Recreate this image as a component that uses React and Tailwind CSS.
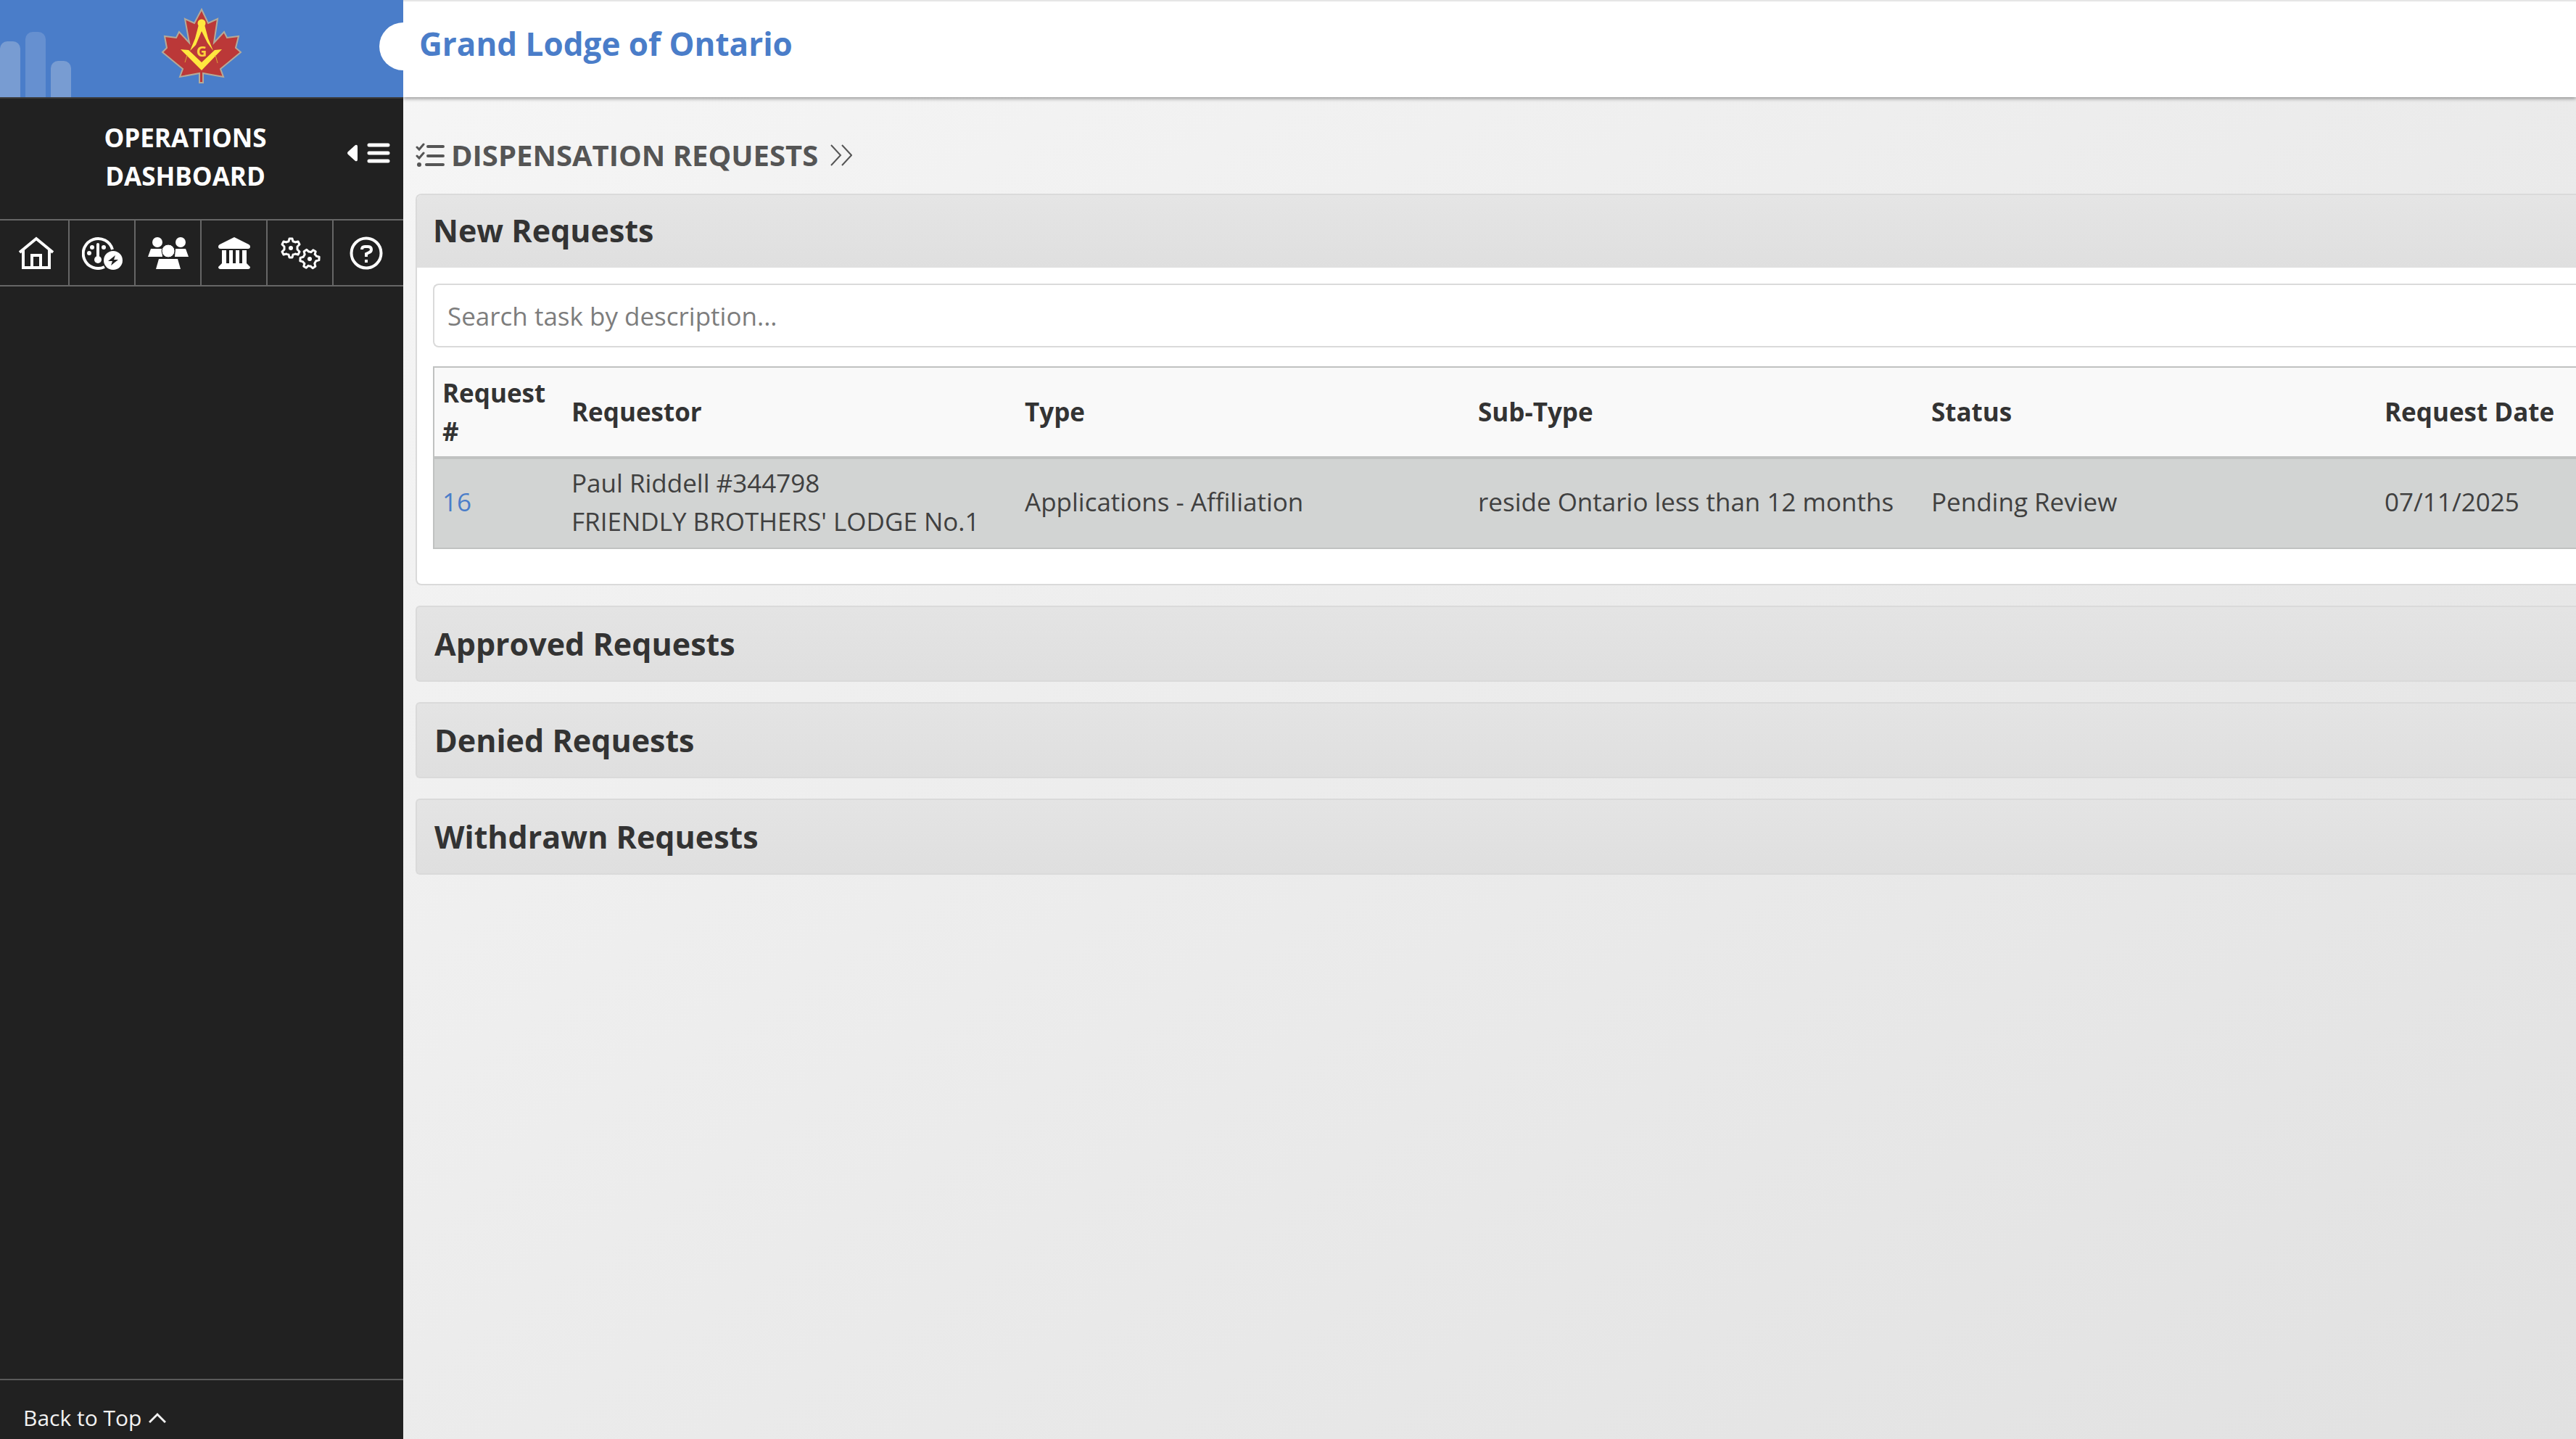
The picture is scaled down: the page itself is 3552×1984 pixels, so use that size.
import React, { useState } from 'react';

const panels = ['Approved Requests', 'Denied Requests', 'Withdrawn Requests'];

const columns = ['Requestor', 'Type', 'Sub-Type', 'Status', 'Request Date'];

const requests = [
  {
    id: 16,
    requestor: 'Paul Riddell #344798',
    lodge: "FRIENDLY BROTHERS' LODGE No.1",
    type: 'Applications - Affiliation',
    subType: 'reside Ontario less than 12 months',
    status: 'Pending Review',
    date: '07/11/2025',
  },
];

function MapleLogo() {
  return (
    <svg viewBox="-2 0 160 130" className="h-[130px] w-[160px]" aria-hidden="true">
      <path
        d="M78 13 L87 32 L100 26 L95 59 L109 44 L113 52 L129 50 L125 66 L132 72 L104 95 L108 106 L80 101 L80 114 L75 114 L75 101 L48 106 L52 95 L24 72 L30 66 L27 50 L43 52 L47 44 L61 59 L55 26 L68 32 Z"
        fill="#bb3838"
        stroke="#b5aa98"
        strokeWidth="2"
      />
      <path d="M49 68 L60 69 L78 86 L96 69 L106 68 L78 97 Z" fill="#ffe83f" />
      <path d="M74 34 L69 53 L62 70 L70 62 L78 43 L86 59 L94 70 L87 53 L82 34 Z" fill="#ffe83f" />
      <circle cx="78" cy="32" r="5.500" fill="#ffe83f" />
      <text x="78" y="78" textAnchor="middle" fontSize="20" fontWeight="700" fill="#fbd23c">
        G
      </text>
      <path d="M58 76 L55 86 M97 76 L100 87" stroke="#d9a43a" strokeWidth="1" />
    </svg>
  );
}

function HomeIcon() {
  return (
    <svg viewBox="0 0 48 46" className="h-[46px] w-[48px]" fill="none" stroke="currentColor" strokeWidth="4" aria-hidden="true">
      <path d="M1 22 L24 3 L47 22 M6 19 V43 H42 V19 M18 43 V26 H30 V43" />
    </svg>
  );
}

function GaugeIcon() {
  return (
    <svg viewBox="0 0 56 46" className="h-[46px] w-[56px]" fill="none" stroke="currentColor" aria-hidden="true">
      <path d="M42 18 A20.500 20.500 0 1 0 31 42" strokeWidth="4" />
      <path d="M22 11 V32" strokeWidth="4" strokeLinecap="round" />
      <g fill="currentColor" stroke="none">
        <circle cx="22" cy="32" r="5" />
        <circle cx="14" cy="15" r="3" />
        <circle cx="30" cy="15" r="3" />
        <circle cx="10" cy="23" r="3" />
        <circle cx="43" cy="33" r="13" />
      </g>
      <path d="M46 26 L36 34 H42 L40 40 L50 32 H44 Z" fill="#212121" stroke="none" />
    </svg>
  );
}

function MembersIcon() {
  return (
    <svg viewBox="0 0 56 46" className="h-[46px] w-[56px]" fill="currentColor" aria-hidden="true">
      <circle cx="13" cy="8" r="7" />
      <circle cx="45" cy="8" r="7" />
      <path d="M4 17 H19 L20 28 H0 Z M38 17 H52 L56 28 H37 Z" />
      <circle cx="28" cy="20" r="9" stroke="#212121" strokeWidth="1" />
      <path d="M15 31 H41 L45 45 H11 Z" />
    </svg>
  );
}

function LodgeIcon() {
  return (
    <svg viewBox="0 0 46 46" className="size-[46px]" fill="currentColor" aria-hidden="true">
      <path d="M23 1 L43 11 Q45 12 45 14 Q45 17 42 17 H4 Q1 17 1 14 Q1 12 3 11 Z" />
      <path d="M6 19 H12 V37 H16 V19 H21 V37 H25 V19 H30 V37 H34 V19 H40 V37 L45 42 Q45 45 42 45 H4 Q1 45 1 42 L6 37 Z" />
    </svg>
  );
}

const gear =
  'M-2 -13 H2 L3 -9 Q5 -9 6 -8 L10 -9 L12 -5 L9 -2 V2 L12 5 L10 9 L6 8 Q5 9 3 9 L2 13 H-2 L-3 9 Q-5 9 -6 8 L-10 9 L-12 5 L-9 2 V-2 L-12 -5 L-10 -9 L-6 -8 Q-5 -9 -3 -9 Z';

function GearsIcon() {
  return (
    <svg viewBox="0 0 56 46" className="h-[46px] w-[56px]" fill="none" stroke="currentColor" strokeWidth="3" strokeLinejoin="round" aria-hidden="true">
      <path d={gear} transform="translate(15 16)" />
      <path d={gear} transform="translate(41 31) rotate(30)" />
      <circle cx="15" cy="16" r="3" fill="currentColor" stroke="none" />
      <circle cx="41" cy="31" r="3" fill="currentColor" stroke="none" />
    </svg>
  );
}

function HelpIcon() {
  return (
    <svg viewBox="0 0 46 46" className="size-[46px]" fill="none" stroke="currentColor" strokeWidth="4" aria-hidden="true">
      <circle cx="23" cy="23" r="20.500" />
      <path d="M17 18 Q17 14 21 14 H25 Q30 14 30 18 Q30 21 27 22 L23 24 V28" />
      <path d="M21 34 H25" />
    </svg>
  );
}

function CollapseIcon() {
  return (
    <svg viewBox="0 0 60 30" className="h-[30px] w-[60px]" fill="currentColor" aria-hidden="true">
      <path d="M2 13 L12 4 Q15 3 15 6 V24 Q15 27 12 26 L2 17 Q0 15 2 13 Z" />
      <path d="M31 4 H57 M31 15 H57 M31 26 H57" stroke="currentColor" strokeWidth="5" strokeLinecap="round" />
    </svg>
  );
}

function TasksIcon() {
  return (
    <svg viewBox="0 0 40 34" className="h-[34px] w-[40px]" fill="none" stroke="currentColor" strokeWidth="4" strokeLinecap="round" aria-hidden="true">
      <path d="M17 5 H38 M17 18 H38 M15 30 H38" />
      <path d="M2 6 L5 9 L11 2 M2 18 L5 21 L11 14" strokeWidth="3" />
      <circle cx="5" cy="30" r="3" fill="currentColor" stroke="none" />
    </svg>
  );
}

const navItems = [
  { label: 'Home', Icon: HomeIcon },
  { label: 'Activity', Icon: GaugeIcon },
  { label: 'Members', Icon: MembersIcon },
  { label: 'Lodges', Icon: LodgeIcon },
  { label: 'Settings', Icon: GearsIcon },
  { label: 'Help', Icon: HelpIcon },
];

function Sidebar() {
  return (
    <aside className="flex w-[556px] shrink-0 flex-col bg-[#212121] text-white">
      <div className="relative flex h-[134px] justify-center overflow-hidden bg-[#4a7dc9]">
        <div className="absolute bottom-0 left-0 flex items-end gap-[7px]">
          <span className="h-[77px] w-[28px] rounded-t-[10px] bg-[#789cd2]" />
          <span className="h-[90px] w-[28px] rounded-t-[10px] bg-[#6690d0]" />
          <span className="h-[50px] w-[28px] rounded-t-[10px] bg-[#789cd2]" />
        </div>
        <MapleLogo />
        <span className="absolute top-[31px] -right-[33px] size-[66px] rounded-full bg-white" />
      </div>

      <div className="flex h-[168px] items-center border-t-2 border-[#3a3a3a] pr-[18px] pb-[6px]">
        <h2 className="flex-1 pl-[33px] text-center leading-[53px] font-bold">
          OPERATIONS
          <br />
          DASHBOARD
        </h2>
        <button type="button" aria-label="Collapse menu" className="mb-[10px]">
          <CollapseIcon />
        </button>
      </div>

      <nav className="flex h-[93px] border-y-2 border-[#666]">
        {navItems.map(({ label, Icon }) => (
          <a
            key={label}
            href="#"
            aria-label={label}
            className="flex w-[91px] items-center justify-center border-r-2 border-[#666] first:w-[96px] first:pl-[6px] last:flex-1 last:border-r-0 last:pr-[6px]"
          >
            <Icon />
          </a>
        ))}
      </nav>

      <a
        href="#"
        className="mt-auto flex h-[83px] items-center gap-[10px] border-t-2 border-[#5a5a5a] pt-[22px] pl-[32px] text-[30px] text-[#f2f2f2]"
      >
        Back to Top
        <svg viewBox="0 0 24 16" className="h-[16px] w-[24px]" fill="none" stroke="currentColor" strokeWidth="3" aria-hidden="true">
          <path d="M1 14 L12 3 L23 14" />
        </svg>
      </a>
    </aside>
  );
}

function RequestTable() {
  return (
    <table className="w-full table-fixed border-collapse border-y-2 border-l-2 border-[#c0c2c1] text-left">
      <thead className="border-b-4 border-[#c0c2c1] bg-[#f9f9f9]">
        <tr className="h-[125px]">
          <th className="w-[179px] px-[11px] leading-[53px]">Request #</th>
          {columns.map((name) => (
            <th key={name} className="w-[625px] px-[11px] last:w-auto">
              {name}
            </th>
          ))}
        </tr>
      </thead>
      <tbody className="bg-[#d2d4d3] text-[#404040]">
        {requests.map((r) => (
          <tr key={r.id} className="h-[125px]">
            <td className="px-[11px] pb-1">
              <a href="#" className="text-[#4a7dc9]">
                {r.id}
              </a>
            </td>
            <td className="px-[11px] pb-1 leading-[53px] whitespace-nowrap">
              {r.requestor}
              <br />
              {r.lodge}
            </td>
            <td className="px-[11px] pb-1">{r.type}</td>
            <td className="px-[11px] pb-1 whitespace-nowrap">{r.subType}</td>
            <td className="px-[11px] pb-1">{r.status}</td>
            <td className="px-[11px] pb-1">{r.date}</td>
          </tr>
        ))}
      </tbody>
    </table>
  );
}

function App() {
  const [search, setSearch] = useState('');

  return (
    <div className="flex min-h-screen font-['Open_Sans',sans-serif] text-[35px] text-[#333]">
      <Sidebar />

      <div className="min-w-0 flex-1 bg-[linear-gradient(to_bottom_right,#f6f6f6,#e1e1e1)]">
        <header className="h-[134px] border-t-2 border-[#e5e5e5] bg-white pt-[28px] pl-[22px] shadow-[0_2px_5px_rgba(0,0,0,0.4)]">
          <h1 className="text-[44px] leading-[60px] font-bold text-[#4a7dc9]">Grand Lodge of Ontario</h1>
        </header>

        <main className="pl-[17px]">
          <div className="flex h-[133px] items-center gap-[9px] pt-[26px] text-[#555]">
            <TasksIcon />
            <h2 className="text-[40px] leading-[60px] font-bold">DISPENSATION REQUESTS</h2>
            <svg viewBox="0 0 30 30" className="ml-2 size-[30px]" fill="none" stroke="currentColor" strokeWidth="2" aria-hidden="true">
              <path d="M1 1 L14 15 L1 29 M16 1 L29 15 L16 29" />
            </svg>
          </div>

          <section className="rounded-l-[8px] border-y-2 border-l-2 border-[#dadada] bg-white">
            <h3 className="rounded-tl-[6px] bg-linear-to-b from-[#e5e5e5] to-[#dfdfdf] pb-[2px] pl-[22px] text-[43px] leading-[98px] font-bold">
              New Requests
            </h3>
            <div className="pt-[22px] pb-[48px] pl-[22px]">
              <input
                type="text"
                aria-label="Search task by description"
                placeholder="Search task by description..."
                value={search}
                onChange={(e) => setSearch(e.target.value)}
                className="mb-[26px] block h-[88px] w-full rounded-l-[8px] border-y-2 border-l-2 border-[#dadada] pl-[18px] placeholder:text-[#7d7d7d]"
              />
              <RequestTable />
            </div>
          </section>

          {panels.map((title) => (
            <button
              key={title}
              type="button"
              className="mt-[28px] block w-full rounded-l-[6px] border-y-2 border-l-2 border-[#dadada] bg-linear-to-b from-[#e4e4e4] to-[#dfdfdf] pl-[24px] text-left text-[43px] leading-[101px] font-bold"
            >
              {title}
            </button>
          ))}
        </main>
      </div>
    </div>
  );
}

export default App;
